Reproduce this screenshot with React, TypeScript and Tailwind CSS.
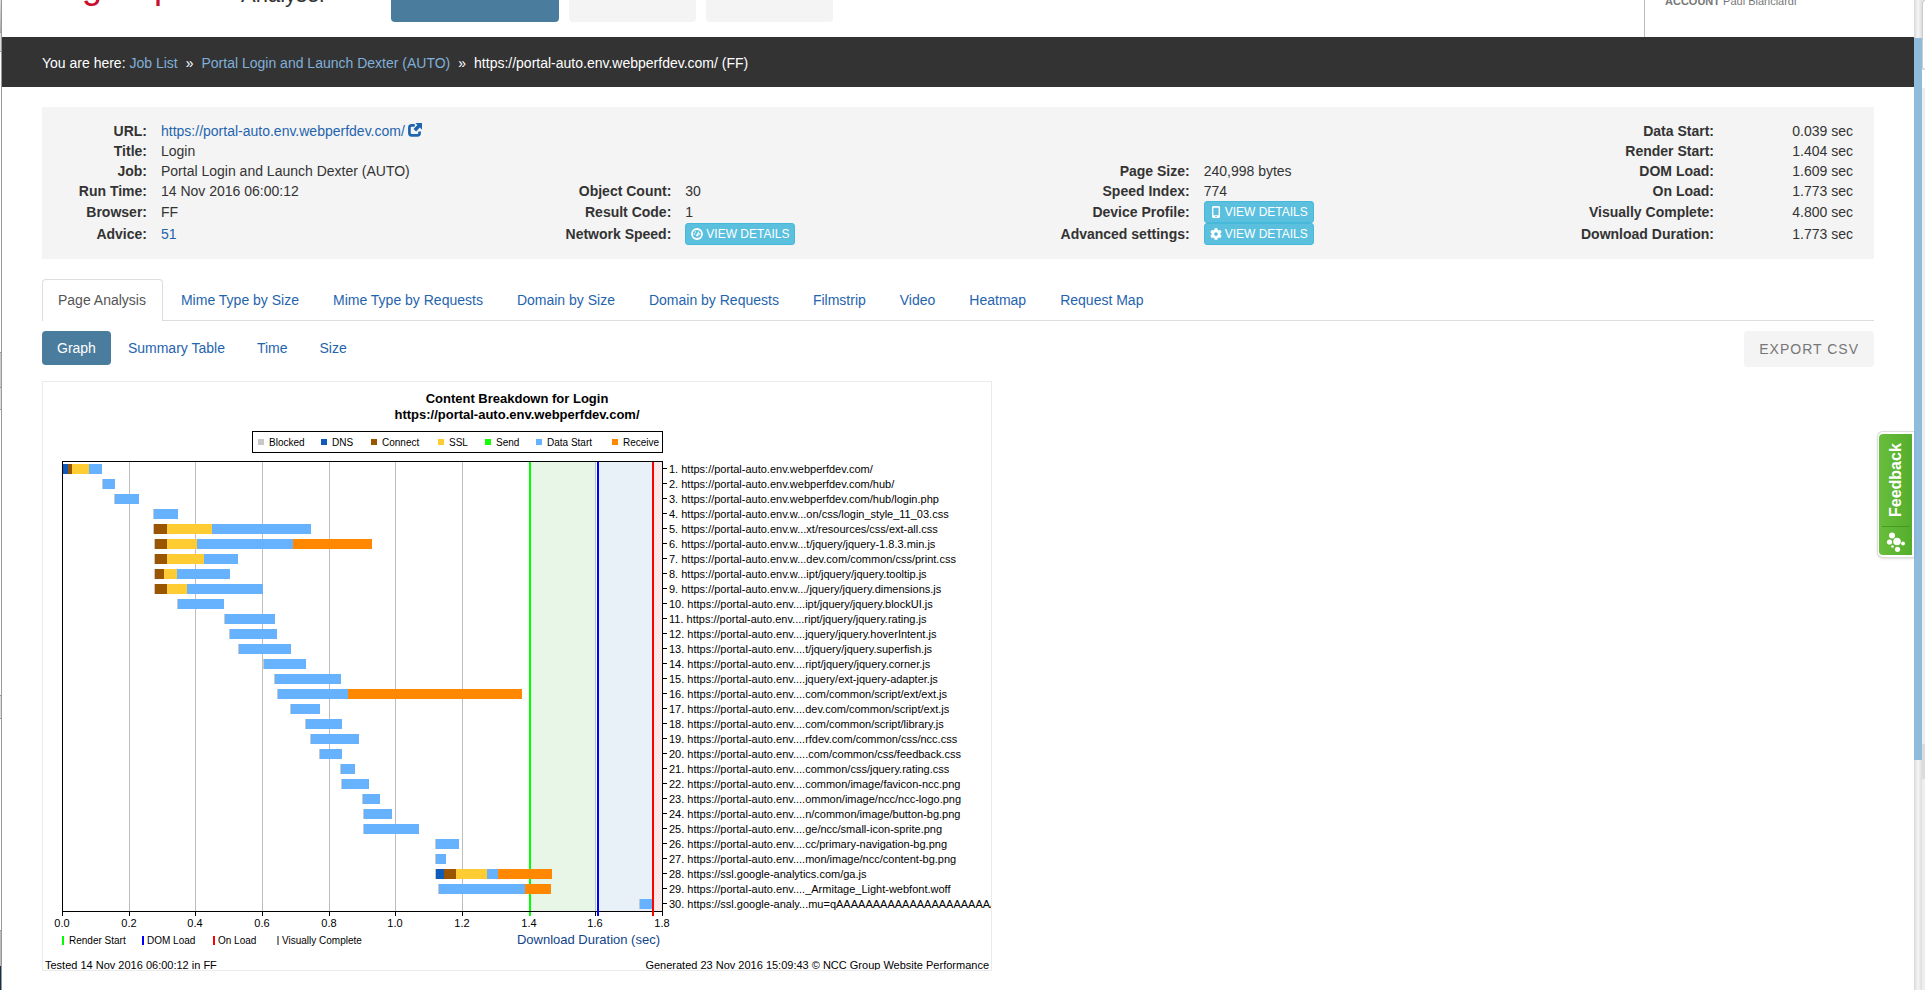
import type { ReactNode } from "react";
import { FaCog } from "react-icons/fa";

type Phase = "blocked" | "dns" | "connect" | "ssl" | "send" | "data" | "receive";

const PHASE_COLORS: Record<Phase, string> = {
  blocked: "#c8c8c8",
  dns: "#0f5bbc",
  connect: "#995500",
  ssl: "#ffcc33",
  send: "#11ff00",
  data: "#66b2ff",
  receive: "#ff8800",
};

const LEGEND: { phase: Phase; label: string; x: number }[] = [
  { phase: "blocked", label: "Blocked", x: 215 },
  { phase: "dns", label: "DNS", x: 278 },
  { phase: "connect", label: "Connect", x: 328 },
  { phase: "ssl", label: "SSL", x: 395 },
  { phase: "send", label: "Send", x: 442 },
  { phase: "data", label: "Data Start", x: 493 },
  { phase: "receive", label: "Receive", x: 569 },
];

// start is the offset from the y axis, parts are [phase, length]
type Request = { label: string; start: number; parts: [Phase, number][] };

const REQUESTS: Request[] = [
  { label: "https://portal-auto.env.webperfdev.com/", start: 1, parts: [["dns", 5], ["connect", 4], ["ssl", 17], ["data", 13]] },
  { label: "https://portal-auto.env.webperfdev.com/hub/", start: 40, parts: [["blocked", 1], ["data", 12]] },
  { label: "https://portal-auto.env.webperfdev.com/hub/login.php", start: 52, parts: [["blocked", 1], ["data", 24]] },
  { label: "https://portal-auto.env.w...on/css/login_style_11_03.css", start: 91, parts: [["blocked", 1], ["data", 24]] },
  { label: "https://portal-auto.env.w...xt/resources/css/ext-all.css", start: 91, parts: [["blocked", 1], ["connect", 13], ["ssl", 45], ["data", 99]] },
  { label: "https://portal-auto.env.w...t/jquery/jquery-1.8.3.min.js", start: 92, parts: [["blocked", 1], ["connect", 12], ["ssl", 30], ["data", 96], ["receive", 79]] },
  { label: "https://portal-auto.env.w...dev.com/common/css/print.css", start: 92, parts: [["blocked", 1], ["connect", 12], ["ssl", 37], ["data", 34]] },
  { label: "https://portal-auto.env.w...ipt/jquery/jquery.tooltip.js", start: 92, parts: [["blocked", 1], ["connect", 9], ["ssl", 13], ["data", 53]] },
  { label: "https://portal-auto.env.w.../jquery/jquery.dimensions.js", start: 92, parts: [["blocked", 1], ["connect", 12], ["ssl", 20], ["data", 76]] },
  { label: "https://portal-auto.env....ipt/jquery/jquery.blockUI.js", start: 115, parts: [["blocked", 1], ["data", 46]] },
  { label: "https://portal-auto.env....ript/jquery/jquery.rating.js", start: 162, parts: [["blocked", 1], ["data", 50]] },
  { label: "https://portal-auto.env....jquery/jquery.hoverIntent.js", start: 167, parts: [["blocked", 1], ["data", 47]] },
  { label: "https://portal-auto.env....t/jquery/jquery.superfish.js", start: 176, parts: [["blocked", 1], ["data", 52]] },
  { label: "https://portal-auto.env....ript/jquery/jquery.corner.js", start: 201, parts: [["blocked", 1], ["data", 42]] },
  { label: "https://portal-auto.env....jquery/ext-jquery-adapter.js", start: 212, parts: [["blocked", 1], ["data", 66]] },
  { label: "https://portal-auto.env....com/common/script/ext/ext.js", start: 215, parts: [["blocked", 1], ["data", 70], ["receive", 174]] },
  { label: "https://portal-auto.env....dev.com/common/script/ext.js", start: 228, parts: [["blocked", 1], ["data", 29]] },
  { label: "https://portal-auto.env....com/common/script/library.js", start: 243, parts: [["blocked", 1], ["data", 36]] },
  { label: "https://portal-auto.env....rfdev.com/common/css/ncc.css", start: 248, parts: [["blocked", 1], ["data", 48]] },
  { label: "https://portal-auto.env.....com/common/css/feedback.css", start: 257, parts: [["blocked", 1], ["data", 22]] },
  { label: "https://portal-auto.env....common/css/jquery.rating.css", start: 278, parts: [["blocked", 1], ["data", 14]] },
  { label: "https://portal-auto.env....common/image/favicon-ncc.png", start: 279, parts: [["blocked", 1], ["data", 27]] },
  { label: "https://portal-auto.env....ommon/image/ncc/ncc-logo.png", start: 300, parts: [["blocked", 1], ["data", 17]] },
  { label: "https://portal-auto.env....n/common/image/button-bg.png", start: 301, parts: [["blocked", 1], ["data", 28]] },
  { label: "https://portal-auto.env....ge/ncc/small-icon-sprite.png", start: 301, parts: [["blocked", 1], ["data", 55]] },
  { label: "https://portal-auto.env....cc/primary-navigation-bg.png", start: 373, parts: [["blocked", 1], ["data", 23]] },
  { label: "https://portal-auto.env....mon/image/ncc/content-bg.png", start: 373, parts: [["blocked", 1], ["data", 10]] },
  { label: "https://ssl.google-analytics.com/ga.js", start: 373, parts: [["blocked", 1], ["dns", 8], ["connect", 12], ["ssl", 31], ["data", 11], ["receive", 54]] },
  { label: "https://portal-auto.env...._Armitage_Light-webfont.woff", start: 376, parts: [["blocked", 1], ["data", 86], ["receive", 26]] },
  { label: "https://ssl.google-analy...mu=qAAAAAAAAAAAAAAAAAAAAAAE", start: 577, parts: [["blocked", 1], ["data", 12]] },
];

const TICKS = ["0.0", "0.2", "0.4", "0.6", "0.8", "1.0", "1.2", "1.4", "1.6", "1.8"];

const X0 = 19;
const TOP = 79;
const PLOT_W = 600;
const PLOT_H = 450;
const ROW = 15;

const tickX = (i: number) => X0 + Math.round((i * PLOT_W) / 9);

function Bars({ request, y }: { request: Request; y: number }) {
  let x = X0 + request.start;
  return (
    <>
      {request.parts.map(([phase, width]) => {
        const left = x;
        x += width;
        return <rect key={phase} x={left} y={y} width={width} height={10} fill={PHASE_COLORS[phase]} />;
      })}
    </>
  );
}

function BreakdownChart() {
  const bottom = TOP + PLOT_H;
  const right = X0 + PLOT_W;
  return (
    <svg
      width="948"
      height="588"
      viewBox="0 0 948 588"
      shapeRendering="crispEdges"
      className="block overflow-hidden"
      fontFamily="'Liberation Sans', Arial, sans-serif"
      fontSize="11"
      role="img"
      aria-label="Content Breakdown for Login"
    >
      <g fontSize="13" fontWeight="bold" textAnchor="middle">
        <text x="474" y="21">Content Breakdown for Login</text>
        <text x="474" y="37">https://portal-auto.env.webperfdev.com/</text>
      </g>

      {/* legend */}
      <rect x="209.5" y="49.5" width="410" height="21" fill="none" stroke="#000" />
      {LEGEND.map((item) => (
        <g key={item.phase}>
          <rect x={item.x} y="57" width="6" height="6" fill={PHASE_COLORS[item.phase]} />
          <text x={item.x + 11} y="64" fontSize="10">{item.label}</text>
        </g>
      ))}

      {/* milestone zones and grid */}
      <rect x="488" y={TOP} width="64" height={PLOT_H} fill="#e8f6e8" />
      <rect x="556" y={TOP} width="53" height={PLOT_H} fill="#e8f0f8" />
      <rect x="611" y={TOP} width="8" height={PLOT_H} fill="#fbe8e8" />
      {TICKS.slice(1, -1).map((t, i) => (
        <rect key={t} x={tickX(i + 1)} y={TOP} width="1" height={PLOT_H} fill="#bebebe" />
      ))}
      <rect x="486" y={TOP} width="2" height={PLOT_H + 5} fill="#00ff00" />

      {REQUESTS.map((request, i) => (
        <Bars key={i} request={request} y={TOP + 3 + i * ROW} />
      ))}

      {/* axes */}
      <rect x={X0} y={TOP} width={PLOT_W + 1} height="1" />
      <rect x={X0} y={bottom} width={PLOT_W + 1} height="1" />
      <rect x={X0} y={TOP} width="1" height={PLOT_H} />
      <rect x={right} y={TOP} width="1" height={PLOT_H} />
      {TICKS.map((t, i) => (
        <g key={t}>
          {t !== "1.4" && <rect x={tickX(i)} y={bottom} width="1" height="5" />}
          <text x={tickX(i)} y="545" textAnchor="middle">{t}</text>
        </g>
      ))}
      <rect x="554" y={TOP + 1} width="2" height={PLOT_H + 4} fill="#0000ff" />
      <rect x="609" y={TOP + 1} width="2" height={PLOT_H + 4} fill="#ff0000" />

      {REQUESTS.map((request, i) => (
        <g key={i}>
          <rect x={right + 1} y={TOP + 7 + i * ROW} width="4" height="1" />
          <text x="626" y={TOP + 12 + i * ROW}>{`${i + 1}. ${request.label}`}</text>
        </g>
      ))}

      <g fontSize="10">
        <rect x="19" y="554" width="2" height="9" fill="#00ff00" />
        <text x="26" y="562">Render Start</text>
        <rect x="99" y="554" width="2" height="9" fill="#0000ff" />
        <text x="104" y="562">DOM Load</text>
        <rect x="170" y="554" width="2" height="9" fill="#ff0000" />
        <text x="175" y="562">On Load</text>
        <rect x="234" y="554" width="2" height="9" fill="#888" />
        <text x="239" y="562">Visually Complete</text>
      </g>
      <text x="617" y="562" fontSize="13" textAnchor="end" fill="#114488">Download Duration (sec)</text>

      <text x="2" y="587">Tested 14 Nov 2016 06:00:12 in FF</text>
      <text x="946" y="587" textAnchor="end">Generated 23 Nov 2016 15:09:43 © NCC Group Website Performance</text>
    </svg>
  );
}

function NewWindowIcon() {
  return (
    <svg width="14" height="14" viewBox="0 0 14 14" className="ml-[3px] inline-block align-[-1px]" aria-hidden="true">
      <path d="M6.8 2.4H3.7A2.3 2.3 0 0 0 1.4 4.7V10.1A2.3 2.3 0 0 0 3.7 12.4H9.3A2.3 2.3 0 0 0 11.6 10.1V8.6" fill="none" stroke="currentColor" strokeWidth="2.7" />
      <path d="M7.3 0H14V6.7L11.9 4.6L8.1 8.5L5.5 5.9L9.4 2.1Z" fill="currentColor" />
    </svg>
  );
}

function GaugeIcon() {
  return (
    <svg width="12" height="12" viewBox="0 0 12 12" aria-hidden="true">
      <circle cx="6" cy="6" r="5" fill="none" stroke="currentColor" strokeWidth="1.8" />
      <path d="M5.2 7.6L7.8 3.6L6.9 8.2Z" fill="currentColor" stroke="currentColor" strokeWidth="0.6" />
      <circle cx="3.4" cy="6" r="0.7" fill="currentColor" />
      <circle cx="4.4" cy="3.9" r="0.7" fill="currentColor" />
      <circle cx="8.6" cy="6" r="0.7" fill="currentColor" />
    </svg>
  );
}

function PhoneIcon() {
  return (
    <svg width="12" height="12" viewBox="0 0 12 12" aria-hidden="true">
      <path fillRule="evenodd" d="M3.5 0H8.5Q10 0 10 1.5V10.5Q10 12 8.5 12H3.5Q2 12 2 10.5V1.5Q2 0 3.5 0ZM3.4 1.8V9.2H8.6V1.8ZM5.3 10.1V11.1H6.7V10.1Z" fill="currentColor" />
    </svg>
  );
}

function DetailsButton({ icon }: { icon: ReactNode }) {
  return (
    <button type="button" className="flex h-[22px] items-center gap-[3px] rounded-[3px] border border-[#46b8da] bg-[#5bc0de] px-[5px] text-xs whitespace-nowrap text-white">
      {icon}
      VIEW DETAILS
    </button>
  );
}

const link = "text-[#1f64ae]";

// four label / value pairs per row
const SUMMARY: [string, ReactNode][][] = [
  [["URL:", <a href="#" className={link}>https://portal-auto.env.webperfdev.com/<NewWindowIcon /></a>], ["", ""], ["", ""], ["Data Start:", "0.039 sec"]],
  [["Title:", "Login"], ["", ""], ["", ""], ["Render Start:", "1.404 sec"]],
  [["Job:", "Portal Login and Launch Dexter (AUTO)"], ["", ""], ["Page Size:", "240,998 bytes"], ["DOM Load:", "1.609 sec"]],
  [["Run Time:", "14 Nov 2016 06:00:12"], ["Object Count:", "30"], ["Speed Index:", "774"], ["On Load:", "1.773 sec"]],
  [["Browser:", "FF"], ["Result Code:", "1"], ["Device Profile:", <DetailsButton icon={<PhoneIcon />} />], ["Visually Complete:", "4.800 sec"]],
  [["Advice:", <a href="#" className={link}>51</a>], ["Network Speed:", <DetailsButton icon={<GaugeIcon />} />], ["Advanced settings:", <DetailsButton icon={<FaCog size={12} />} />], ["Download Duration:", "1.773 sec"]],
];

function Summary() {
  return (
    <div className="bg-[#f4f4f4] py-3.5">
      <table className="w-full table-fixed border-collapse">
        <colgroup>
          <col className="w-28" />
          <col />
          <col className="w-40" />
          <col />
          <col className="w-[154px]" />
          <col />
          <col className="w-40" />
          <col className="w-[153px]" />
        </colgroup>
        <tbody>
          {SUMMARY.map((row, r) => (
            <tr key={r} className={r > 3 ? "h-[22px]" : "h-5"}>
              {row.map(([label, value], c) => [
                <th key={`l${c}`} scope="row" className="p-0 pr-[7px] text-right font-bold whitespace-nowrap">{label}</th>,
                <td key={`v${c}`} className={c === 3 ? "p-0 pr-[21px] text-right" : "p-0 pl-[7px] whitespace-nowrap"}>{value}</td>,
              ])}
            </tr>
          ))}
        </tbody>
      </table>
    </div>
  );
}

const TABS = ["Page Analysis", "Mime Type by Size", "Mime Type by Requests", "Domain by Size", "Domain by Requests", "Filmstrip", "Video", "Heatmap", "Request Map"];
const VIEWS = ["Graph", "Summary Table", "Time", "Size"];

function Tabs() {
  return (
    <nav className="mt-5 flex gap-0.5 border-b border-[#ddd]">
      {TABS.map((tab, i) => (
        <a
          key={tab}
          href="#"
          className={
            i === 0
              ? "-mb-px rounded-t border border-b-0 border-[#ddd] bg-white pt-2.5 pr-4 pb-[11px] pl-[15px] text-[#555]"
              : "border border-b-0 border-transparent px-[15px] py-2.5 text-[#1f64ae]"
          }
        >
          {tab}
        </a>
      ))}
    </nav>
  );
}

function Toolbar() {
  return (
    <div className="mt-2.5 flex items-start justify-between">
      <nav className="flex gap-0.5">
        {VIEWS.map((view, i) => (
          <a
            key={view}
            href="#"
            className={i === 0 ? "rounded bg-[#4a7c9d] px-[15px] py-[7px] text-white" : "px-[15px] py-[7px] text-[#1f64ae]"}
          >
            {view}
          </a>
        ))}
      </nav>
      <button type="button" className="h-9 rounded bg-[#f4f4f4] px-[15px] tracking-[1px] text-[#777]">
        EXPORT CSV
      </button>
    </div>
  );
}

function Header() {
  return (
    <header className="-mt-[60px] flex h-[97px] items-stretch overflow-hidden pl-6">
      <div className="flex w-[365px] shrink-0 items-start pt-7">
        <span className="w-[215px] text-[36px] leading-9 text-[#c8102e]">nccgroup</span>
        <span className="pt-[15px] text-[22px] leading-6 text-[#333]">Analyser</span>
      </div>
      <nav className="flex items-end gap-2.5 pb-[15px]">
        <a href="#" aria-label="Jobs" className="h-11 w-[168px] rounded bg-[#4a7c9d]" />
        <a href="#" aria-label="Reports" className="h-11 w-[127px] rounded bg-[#f4f4f4]" />
        <a href="#" aria-label="Help" className="h-11 w-[127px] rounded bg-[#f4f4f4]" />
      </nav>
      <div className="ml-auto flex w-[270px] items-start border-l border-[#bbb] pt-[51px] pl-5 text-[11px] text-[#777]">
        <p><b>ACCOUNT</b> Paul Blanciardi</p>
      </div>
    </header>
  );
}

function Breadcrumb() {
  return (
    <nav className="bg-[#333] px-10 pt-4 pb-3.5 text-white">
      You are here: <a href="#" className="text-[#80b0d9]">Job List</a>
      <span className="mx-2">»</span>
      <a href="#" className="text-[#80b0d9]">Portal Login and Launch Dexter (AUTO)</a>
      <span className="mx-2">»</span>
      https://portal-auto.env.webperfdev.com/ (FF)
    </nav>
  );
}

function FeedbackTab() {
  return (
    <button type="button" className="absolute top-[431px] right-[11px] flex h-[127px] w-[37px] rounded-l-md border border-r-0 border-[#ddd] bg-white py-0.5 pr-0.5 pl-px shadow-sm">
      <span className="flex h-full w-full flex-col items-center rounded-l bg-linear-to-r from-[#68bd3c] to-[#55ae2b] text-white">
        <span className="flex h-[92px] rotate-180 items-center justify-center text-base font-bold [writing-mode:vertical-rl]">Feedback</span>
        <span className="h-px w-7 bg-[#459a22]" />
        <svg width="20" height="22" viewBox="0 0 20 22" className="mt-1" fill="currentColor" aria-hidden="true">
          <circle cx="6" cy="4.5" r="3" />
          <circle cx="3.5" cy="11" r="2.6" />
          <circle cx="11" cy="10.5" r="3.8" />
          <circle cx="17" cy="12.5" r="2" />
          <circle cx="6.5" cy="15.5" r="1.3" />
          <circle cx="11.5" cy="18.3" r="2.6" />
        </svg>
      </span>
    </button>
  );
}

// slivers of the windows behind the page
function LeftEdge() {
  return (
    <div className="flex w-0.5 shrink-0 flex-col border-r border-[#999] bg-white">
      <div className="h-8 bg-linear-to-b from-[#ddd] to-[#aaa]" />
      <div className="h-5 border-y border-[#999] bg-[#ddd]" />
      <div className="h-[300px]" />
      <div className="h-9 border-y border-[#999] bg-[#ccc]" />
      <div className="h-[22px] border-b border-[#999] bg-[#ddd]" />
      <div className="h-[285px]" />
      <div className="h-6 border-y border-[#999] bg-[#ddd]" />
      <div className="h-[211px]" />
      <div className="h-9 border-t border-[#999] bg-[#bbb]" />
      <div className="flex-1 bg-[#16304f]" />
    </div>
  );
}

function RightEdge() {
  return (
    <>
      <div className="flex w-2 shrink-0 flex-col bg-linear-to-r from-[#d8d8d8] via-[#f6f6f6] to-[#dcdcdc]">
        <div className="h-[38px]" />
        <div className="h-[722px] bg-[#8fbbdc]" />
      </div>
      <div className="flex w-[3px] shrink-0 flex-col bg-[#eee]">
        <div className="h-[70px] rounded-l border border-r-0 border-[#ccc] bg-white" />
        <div className="h-[18px] bg-white" />
        <div className="h-[656px]" />
        <div className="h-[35px] bg-[#dcdcdc]" />
      </div>
    </>
  );
}

export default function App() {
  return (
    <div className="relative flex min-h-screen overflow-hidden bg-white font-['Liberation_Sans',Arial,sans-serif] text-sm leading-5 text-[#333]">
      <LeftEdge />
      <div className="min-w-0 flex-1">
        <Header />
        <Breadcrumb />
        <main className="px-10 pt-5">
          <Summary />
          <Tabs />
          <Toolbar />
          <div className="mt-3.5 w-fit border border-[#ebebeb]">
            <BreakdownChart />
          </div>
        </main>
      </div>
      <RightEdge />
      <FeedbackTab />
    </div>
  );
}
